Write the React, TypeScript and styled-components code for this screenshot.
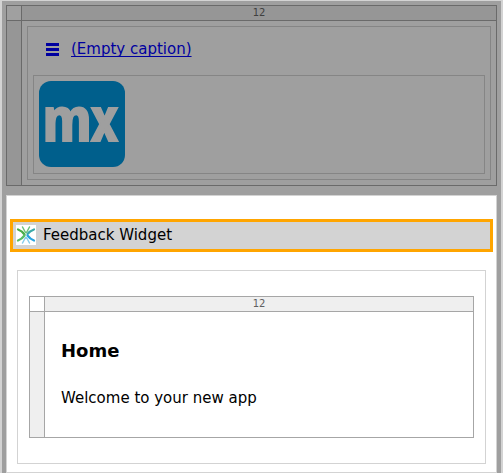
import React from "react";
import styled, { createGlobalStyle } from "styled-components";

type Tone = "dimmed" | "active";

const tones = {
  dimmed: { line: "#6a6a6a", track: "#969696", corner: "#a0a0a0", cell: "#9f9f9f", label: "#404040" },
  active: { line: "#a6a6a6", track: "#efefef", corner: "#ffffff", cell: "#ffffff", label: "#606060" },
};

const GlobalStyle = createGlobalStyle`
  *, *::before, *::after { box-sizing: border-box; }
  body {
    margin: 0;
    background: #d3d3d3;
    color: #000;
    font-family: Verdana, "DejaVu Sans", sans-serif;
    font-size: 15px;
    line-height: 20px;
  }
`;

const Canvas = styled.div`
  display: flex;
  flex-direction: column;
  gap: 9px;
  margin: 1px 2px;
  padding: 4px 4px 0;
  background: #9f9f9f;
`;

const Grid = styled.section<{ $tone: Tone }>`
  display: grid;
  grid-template-columns: 14px 1fr;
  grid-template-rows: 14px auto;
  gap: 1px;
  border: 1px solid ${(p) => tones[p.$tone].line};
  background: ${(p) => tones[p.$tone].line};
`;

const Corner = styled.div<{ $tone: Tone }>`
  background: ${(p) => tones[p.$tone].corner};
`;

const Track = styled.div<{ $tone: Tone }>`
  background: ${(p) => tones[p.$tone].track};
  color: ${(p) => tones[p.$tone].label};
  font-size: 10px;
  line-height: 14px;
  text-align: center;
`;

const Cell = styled.div<{ $tone: Tone; $pad: string }>`
  padding: ${(p) => p.$pad};
  background: ${(p) => tones[p.$tone].cell};
`;

const Outline = styled.div<{ $pad: string }>`
  padding: ${(p) => p.$pad};
  border: 1px solid #858585;
`;

const MenuLink = styled.a`
  display: flex;
  align-items: center;
  gap: 12px;
  height: 20px;
  margin: 0 0 16px 13px;
  color: #0000a0;
  text-decoration: none;
`;

const MenuCaption = styled.span`
  text-decoration: underline;
  text-decoration-thickness: 1px;
  text-decoration-skip-ink: none;
  text-underline-offset: 2px;
`;

const Logo = styled.svg`
  display: block;
  width: 86px;
  height: 86px;
  overflow: visible;
`;

const Content = styled.main`
  padding: 23px 3px 8px;
  border: 1px solid #d3d3d3;
  background: #fff;
`;

const Widget = styled.div`
  display: flex;
  align-items: center;
  gap: 7px;
  height: 33px;
  padding: 0 3px 1px;
  border: 3px solid #ffa500;
  background: #d3d3d3;
`;

const WidgetIcon = styled.svg`
  width: 20px;
  height: 20px;
`;

const Container = styled.div`
  margin: 18px 7px 0;
  padding: 25px 11px;
  border: 1px solid #d3d3d3;
`;

const Title = styled.h1`
  margin: 0;
  font-size: 18px;
  line-height: 24px;
`;

const Text = styled.p`
  margin: 25px 0 0;
`;

function LayoutGrid({ tone, pad, children }: { tone: Tone; pad: string; children: React.ReactNode }) {
  return (
    <Grid $tone={tone}>
      <Corner $tone={tone} />
      <Track $tone={tone}>12</Track>
      <Track $tone={tone} />
      <Cell $tone={tone} $pad={pad}>{children}</Cell>
    </Grid>
  );
}

export default function App() {
  return (
    <>
      <GlobalStyle />
      <Canvas>
        <LayoutGrid tone="dimmed" pad="5px">
          <Outline $pad="12px 5px 5px">
            <MenuLink href="#">
              <svg width="13" height="13" viewBox="0 0 13 13" aria-hidden="true">
                <path d="M0 1.500H13M0 6.500H13M0 11.500H13" stroke="currentColor" strokeWidth="3" />
              </svg>
              <MenuCaption>(Empty caption)</MenuCaption>
            </MenuLink>
            <Outline $pad="5px 5px 6px">
              <Logo viewBox="0 0 86 86" role="img" aria-label="mx">
                <rect width="86" height="86" rx="12" fill="#005f8c" />
                <text
                  x="4"
                  y="60"
                  fill="#9f9f9f"
                  stroke="#9f9f9f"
                  strokeWidth="2"
                  fontFamily="'Open Sans Condensed', 'Open Sans', sans-serif"
                  fontWeight="700"
                  fontSize="62"
                >
                  mx
                </text>
              </Logo>
            </Outline>
          </Outline>
        </LayoutGrid>
        <Content>
          <Widget>
            <WidgetIcon viewBox="0 0 20 20" aria-hidden="true">
              <rect width="20" height="20" fill="#fff" />
              <g fill="none" strokeLinecap="round">
                <g strokeWidth="1.500">
                  <path d="M6.500 2L9.500 7.500M13.500 2L10.500 7.500" stroke="#6cc27a" />
                  <path d="M6.500 18L9.500 12.500M13.500 18L10.500 12.500" stroke="#86cdec" />
                </g>
                <g strokeWidth="2.200">
                  <path d="M2 4.500Q6 6 8.500 9.500" stroke="#48ad48" />
                  <path d="M2 15.500Q6 14 8.500 10.500" stroke="#58bd68" />
                  <path d="M18 4.500Q14 6 11.500 9" stroke="#3aa9a8" />
                  <path d="M18 15.500Q14 14 11.500 10.500" stroke="#28a3df" />
                </g>
              </g>
            </WidgetIcon>
            <span>Feedback Widget</span>
          </Widget>
          <Container>
            <LayoutGrid tone="active" pad="27px 16px 29px">
              <Title>Home</Title>
              <Text>Welcome to your new app</Text>
            </LayoutGrid>
          </Container>
        </Content>
      </Canvas>
    </>
  );
}
